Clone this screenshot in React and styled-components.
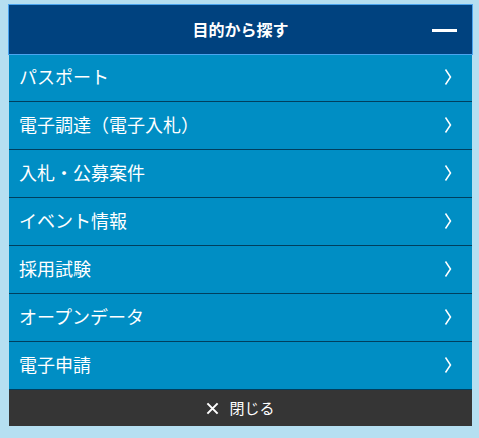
import React from 'react';
import styled, { createGlobalStyle } from 'styled-components';

const items = [
  'パスポート',
  '電子調達（電子入札）',
  '入札・公募案件',
  'イベント情報',
  '採用試験',
  'オープンデータ',
  '電子申請',
];

export default function App() {
  return (
    <>
      <GlobalStyle />
      <Page>
        <Panel>
          <Header>
            <HeaderTitle>目的から探す</HeaderTitle>
            <Minus />
          </Header>
          <List>
            {items.map((label) => (
              <Row key={label}>
                <RowLabel>{label}</RowLabel>
                <Chevron viewBox="0 0 8 16">
                  <path d="M1.5 0.5 L6.5 8 L1.5 15.5" />
                </Chevron>
              </Row>
            ))}
          </List>
          <Footer>
            <CloseIcon viewBox="0 0 14 14">
              <path d="M1.5 1.5 L12.5 12.5 M12.5 1.5 L1.5 12.5" />
            </CloseIcon>
            <span>閉じる</span>
          </Footer>
        </Panel>
      </Page>
    </>
  );
}

/* Global */
const GlobalStyle = createGlobalStyle`
  html, body {
    margin: 0;
    padding: 0;
    background: #b5dff1;
  }
  body {
    font-family: "Noto Sans CJK JP", "Noto Sans", sans-serif;
  }
`;

/* Styled Components */
const Page = styled.div`
  width: 479px;
  height: 438px;
  padding: 5px 0 0 9px;
  box-sizing: border-box;
`;

const Panel = styled.div`
  width: 463px;
  display: flex;
  flex-direction: column;
`;

const Header = styled.div`
  position: relative;
  z-index: 1;
  height: 49px;
  display: flex;
  align-items: center;
  justify-content: center;
  padding-bottom: 2px;
  box-sizing: border-box;
  background: #00427f;
  outline: 1px solid #4ba4ee;
  color: #fff;
`;

const HeaderTitle = styled.span`
  font-size: 16px;
  font-weight: 700;
  line-height: 1;
`;

const Minus = styled.span`
  position: absolute;
  right: 15px;
  top: 24px;
  width: 25px;
  height: 3px;
  background: #fff;
`;

const List = styled.ul`
  list-style: none;
  margin: 0;
  padding: 0;
`;

const Row = styled.li`
  height: 48px;
  box-sizing: border-box;
  display: flex;
  align-items: center;
  justify-content: space-between;
  padding: 0 20px 3px 10px;
  background: #008ec4;
  border-bottom: 1px solid #003f5e;
  color: #fff;
`;

const RowLabel = styled.span`
  font-size: 18px;
  line-height: 1;
`;

const Chevron = styled.svg`
  width: 8px;
  height: 16px;
  margin-top: 2px;
  fill: none;
  stroke: #fff;
  stroke-width: 1.5;
`;

const Footer = styled.div`
  height: 36px;
  box-sizing: border-box;
  display: flex;
  align-items: center;
  justify-content: center;
  gap: 10px;
  padding-bottom: 2px;
  background: #353535;
  color: #fff;
  font-size: 15px;
  line-height: 1;
`;

const CloseIcon = styled.svg`
  width: 13px;
  height: 13px;
  margin-top: 2px;
  fill: none;
  stroke: #fff;
  stroke-width: 2.2;
`;
